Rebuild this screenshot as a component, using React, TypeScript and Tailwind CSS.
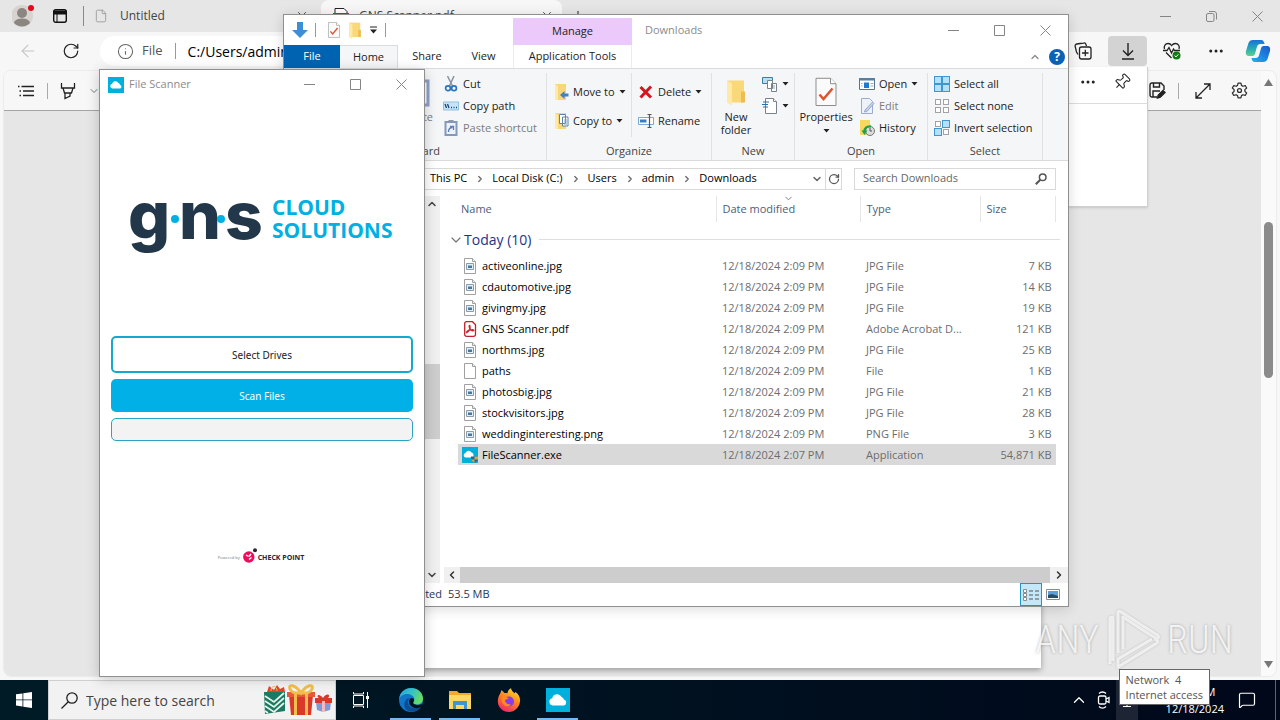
import React from "react";
import {
  ArrowLeft,
  RotateCw,
  Info,
  File as FileIcon,
  X,
  Plus,
  MoreHorizontal,
  Pin,
  ChevronDown,
  ChevronUp,
  ChevronLeft,
  ChevronRight,
  MessageSquare,
} from "lucide-react";

type Kids = { children?: React.ReactNode };

/* ---------- small shared drawings ---------- */

function CloudTile({ className }: { className: string }) {
  return (
    <svg className={className} viewBox="0 0 24 24" aria-hidden="true">
      <rect width="24" height="24" fill="#00b0dc" />
      <path
        d="M6.600 17.400a3.600 3.600 0 0 1-.4-7.100A5 5 0 0 1 15.600 9a3.200 3.200 0 0 1 2.300 2.600 3 3 0 0 1 .1 5.800z"
        fill="#fff"
      />
    </svg>
  );
}

function Caret() {
  return (
    <svg width="7" height="4" viewBox="0 0 7 4" aria-hidden="true">
      <path d="M0.5 0h6L3.500 3.600z" fill="#222" />
    </svg>
  );
}

function CheckPage({ className }: { className: string }) {
  return (
    <svg className={className} viewBox="0 0 22 29" aria-hidden="true">
      <path d="M1 .8h14.500L21 6.200V28H1z" fill="#fbfbfb" stroke="#8d8d8d" />
      <path d="M15.500 .8v5.400H21" fill="#fff" stroke="#8d8d8d" />
      <path d="M4.500 17l4 4.500L17.500 11" fill="none" stroke="#d9552f" strokeWidth="2.500" />
    </svg>
  );
}

function Folder({ className }: { className: string }) {
  return (
    <svg className={className} viewBox="0 0 20 26" aria-hidden="true">
      <path d="M1 1h17v22H1z" fill="#f9d879" />
      <path d="M1 1l5 3v22l-5-3z" fill="#ffe9a6" />
      <path d="M15 12h4v11h-4z" fill="#eebc50" />
    </svg>
  );
}

function WindowButtons({ max = true, className }: { max?: boolean; className: string }) {
  const cell = "flex h-full w-[46px] items-center justify-center text-[#858585]";
  return (
    <div className={className}>
      <button className={cell} aria-label="Minimize">
        <svg width="11" height="11" viewBox="0 0 11 11"><path d="M0 5.500h11" stroke="currentColor" /></svg>
      </button>
      <button className={cell} aria-label="Maximize">
        {max ? (
          <svg width="11" height="11" viewBox="0 0 11 11"><path d="M.5.5h10v10H.5z" fill="none" stroke="currentColor" /></svg>
        ) : (
          <svg width="11" height="11" viewBox="0 0 11 11" fill="none" stroke="currentColor">
            <rect x=".5" y="2.500" width="7.500" height="8" rx="1.500" />
            <path d="M3 .5h5a2.500 2.500 0 0 1 2.500 2.500v5.500" />
          </svg>
        )}
      </button>
      <button className={cell} aria-label="Close">
        <svg width="11" height="11" viewBox="0 0 11 11"><path d="M.5.5l10 10M10.500.5l-10 10" stroke="currentColor" /></svg>
      </button>
    </div>
  );
}

/* ---------- browser ---------- */

function Browser() {
  return (
    <section className="flex min-h-0 flex-1 flex-col bg-[#f7f7f7] text-[#222]">
      <div className="flex h-8 shrink-0 items-center bg-[#e6e6e6] pl-3">
        <svg className="mr-[18px] h-[22px] w-[22px]" viewBox="0 0 22 22" aria-hidden="true">
          <circle cx="10" cy="11" r="11" fill="#d8d3cf" />
          <circle cx="10" cy="8" r="5" fill="#8c8681" />
          <path d="M2 18a8 4.500 0 0 1 16 0 11 11 0 0 1-16 0z" fill="#8c8681" />
          <circle cx="19" cy="3" r="3" fill="#e00b1c" />
        </svg>
        <svg className="h-4 w-4" viewBox="0 0 16 16" aria-hidden="true">
          <rect x="1.700" y="1.700" width="12.600" height="12.600" rx="2" fill="none" stroke="#111" strokeWidth="1.400" />
          <path d="M1.500 2.500h13v4h-13z" fill="#111" />
          <path d="M5 6v8" stroke="#111" strokeWidth="1" />
        </svg>
        <span className="ml-[15px] h-5 w-px bg-[#888]" />
        <div className="flex w-[237px] items-center pl-2.5 text-[12px]">
          <FileIcon className="mr-3 h-4 w-3.5 text-[#999]" strokeWidth={1.5} />
          <span className="flex-1 text-[#444]">Untitled</span>
          <X className="mr-3 h-3.5 w-3.5 text-[#333]" strokeWidth={1.5} />
        </div>
        <div className="flex h-8 w-[241px] items-center rounded-t-lg bg-[#f7f7f7] pl-3 text-[12px]">
          <svg className="mr-2.5 h-4 w-4" viewBox="0 0 16 16" aria-hidden="true">
            <path d="M2 .5h9l3 3V15H2z" fill="#fff" stroke="#222" />
            <path d="M0 5h16v6H0z" fill="#d41f1f" />
          </svg>
          <span className="flex-1 text-[#444]">GNS Scanner.pdf</span>
          <X className="mr-2 h-3.5 w-3.5 text-[#333]" strokeWidth={1.5} />
        </div>
        <Plus className="ml-2 h-4 w-4" strokeWidth={1.5} />
        <WindowButtons max={false} className="ml-auto flex h-8" />
      </div>

      <div className="flex h-[38px] shrink-0 items-center pl-[18px]">
        <ArrowLeft className="h-5 w-5 text-[#c6c6c6]" strokeWidth={1.3} />
        <RotateCw className="ml-6 h-[18px] w-[18px] text-[#222]" strokeWidth={1.6} />
        <div className="ml-5 flex h-[30px] flex-1 items-center rounded-full bg-white pl-[17px] text-[14px]">
          <Info className="h-[17px] w-[17px] text-[#666]" strokeWidth={1.5} />
          <span className="ml-2 text-[13px] text-[#555]">File</span>
          <span className="mx-3 h-4 w-px bg-[#999]" />
          <span className="text-black">C:/Users/admin/</span>
        </div>
        <div className="ml-6 flex items-center">
          <svg className="h-[18px] w-[18px]" viewBox="0 0 18 18" fill="none" stroke="#222" strokeWidth="1.300" aria-hidden="true">
            <path d="M4 12.500 2.500 10 1.200 4.500a2 2 0 0 1 1.500-2.500l7-1a2 2 0 0 1 2.300 1.500l.5 1.500" />
            <rect x="5.500" y="5" width="11.500" height="12" rx="2" />
            <path d="M8 11h6.500M11.300 7.700v6.500" />
          </svg>
          <button aria-label="Downloads" className="ml-4 flex h-[30px] w-[39px] items-center justify-center rounded bg-[#d3d3d3]">
            <svg className="h-[18px] w-[14px]" viewBox="0 0 14 18" fill="none" stroke="#222" strokeWidth="1.400">
              <path d="M7 1v12M2 8.500l5 5 5-5M1 17h12" />
            </svg>
          </button>
          <svg className="ml-4 h-[18px] w-[18px]" viewBox="0 0 18 18" fill="none" stroke="#222" strokeWidth="1.300" aria-hidden="true">
            <path d="M1.500 7C.5 4 2.500 1.500 5 1.500c1.700 0 3 1 3.700 2 .7-1 2-2 3.700-2 2.600 0 4.600 2.500 3.600 5.500M3 10.500l5.500 5.500" />
            <path d="M0 8.500h4l2-3 2.500 5.500 2-4 1 1.500H17" />
            <circle cx="13.500" cy="13.500" r="4" fill="#107c10" stroke="none" />
            <path d="M11.600 13.600l1.400 1.300 2.400-2.600" stroke="#fff" strokeWidth="1" />
          </svg>
          <MoreHorizontal className="ml-[26px] h-[18px] w-[18px]" strokeWidth={2} />
          <svg className="ml-5 mr-[9px] h-[24px] w-[26px]" viewBox="0 0 26 24" aria-hidden="true">
            <defs>
              <linearGradient id="cpa" x1="0" y1="0" x2="0" y2="1">
                <stop offset="0" stopColor="#1d6fd6" /><stop offset=".5" stopColor="#22a8b8" /><stop offset="1" stopColor="#5fd08c" />
              </linearGradient>
              <linearGradient id="cpb" x1="1" y1="0" x2="0" y2="1">
                <stop offset="0" stopColor="#1b58c9" /><stop offset=".5" stopColor="#1e84e0" /><stop offset="1" stopColor="#26b0e6" />
              </linearGradient>
            </defs>
            <path d="M8 1h8c2.500 0 3 2 3.600 4l-4.200 0c-2 0-3 1-3.500 3l-2 7c-.5 1.500-1.500 2-3 2H4c-3 0-3.500-2.500-3-5l2.500-8C4.300 2 5.500 1 8 1z" fill="url(#cpa)" />
            <path d="M18 23h-8c-2.500 0-3-2-3.600-4l4.200 0c2 0 3-1 3.500-3l2-7c.5-1.500 1.500-2 3-2H22c3 0 3.500 2.500 3 5l-2.500 8c-.8 2-2 3-4.500 3z" fill="url(#cpb)" />
          </svg>
        </div>
      </div>

      <div className="mb-[3px] ml-[3px] mr-[3px] flex min-h-0 flex-1 overflow-hidden rounded-lg border border-[#ececec] bg-[#fafafa]">
        <div className="flex min-w-0 flex-1 flex-col">
          <div className="flex h-10 shrink-0 items-center border-b border-[#a5a5a5] bg-[#f7f7f7] pl-[13px]">
            <svg className="h-4 w-[18px]" viewBox="0 0 18 16" stroke="#222" strokeWidth="1.300" aria-hidden="true">
              <path d="M4.500 3.500H17M6 8h11M6 12.500h11M1 3.500h1.500M2.500 8H4M2.500 12.500H4" />
            </svg>
            <span className="ml-3 h-4 w-px bg-[#aaa]" />
            <svg className="ml-3 h-[18px] w-[16px]" viewBox="0 0 16 18" fill="none" stroke="#222" strokeWidth="1.300" aria-hidden="true">
              <path d="M1.500 1v5h13V1M3 6l1.500 5h7L13 6M5 11v5.500l5-2.300V11" />
            </svg>
            <ChevronDown className="ml-3 h-3 w-3 text-[#777]" strokeWidth={2} />
            <div className="ml-auto flex items-center">
              <svg className="h-[17px] w-[17px]" viewBox="0 0 17 17" fill="none" stroke="#222" strokeWidth="1.400" aria-hidden="true">
                <path d="M8 15H3a2 2 0 0 1-2-2V3a2 2 0 0 1 2-2h9l3 3v4M4.500 1v4h6V1M4 15V9h7" />
                <path d="M8.500 16l.8-2.800 4.700-4.700 2 2-4.700 4.700z" fill="#222" />
              </svg>
              <span className="ml-3 h-4 w-px bg-[#aaa]" />
              <svg className="ml-4 h-4 w-4" viewBox="0 0 16 16" fill="none" stroke="#222" strokeWidth="1.300" aria-hidden="true">
                <path d="M1.500 14.500l13-13M9 1h6v6M1 9v6h6" />
              </svg>
              <svg className="ml-5 mr-[13px] h-[17px] w-[17px]" viewBox="0 0 24 24" fill="none" stroke="#333" strokeWidth="1.800" aria-hidden="true">
                <path d="M10 1.500h4l.8 3.300 2 1.200 3.300-1 2 3.500-2.500 2.300v2.400l2.500 2.300-2 3.500-3.300-1-2 1.200-.8 3.300h-4l-.8-3.300-2-1.200-3.300 1-2-3.500 2.500-2.300v-2.400L1.900 8.500l2-3.500 3.300 1 2-1.200z" strokeLinejoin="round" />
                <circle cx="12" cy="12" r="2.800" />
              </svg>
            </div>
          </div>
          <div className="flex min-h-0 flex-1 justify-center bg-[#e6e6e6] pb-2">
            <div className="w-[816px] bg-white shadow-[0_2px_6px_rgba(0,0,0,0.35)]" />
          </div>
        </div>
        <div className="flex w-[15px] flex-col items-center py-2">
          <svg width="9" height="7" viewBox="0 0 9 7"><path d="M4.500 0L9 7H0z" fill="#777" /></svg>
          <span className="mt-[136px] h-[156px] w-[9px] rounded-full bg-[#8b8b8b]" />
          <svg className="mt-auto" width="9" height="7" viewBox="0 0 9 7"><path d="M4.500 7L9 0H0z" fill="#777" /></svg>
        </div>
      </div>
    </section>
  );
}

function DownloadsFlyout() {
  return (
    <div className="absolute right-[132px] top-[67px] h-[140px] w-[360px] border-b border-r border-[#d0d0d0] bg-white shadow-sm">
      <div className="flex h-[37px] items-center justify-end gap-4 border-b border-[#dcdcdc] pb-1.5 pr-4">
        <MoreHorizontal className="h-[18px] w-[18px] text-[#222]" strokeWidth={2} />
        <Pin className="h-[18px] w-[18px] rotate-45 text-[#222]" strokeWidth={1.4} />
      </div>
    </div>
  );
}

/* ---------- file explorer ---------- */

function Group({ label, className, inner, children }: Kids & { label: string; className: string; inner?: string }) {
  return (
    <div className={className}>
      <div className={inner ?? "flex h-[70px] items-start"}>{children}</div>
      <div className="text-center text-[11px] leading-4 text-[#444]">{label}</div>
    </div>
  );
}

function Cmd({ icon, label, caret, dim }: { icon: React.ReactNode; label?: string; caret?: boolean; dim?: boolean }) {
  return (
    <button className="flex h-[22px] items-center gap-1 whitespace-nowrap">
      {icon}
      {label && <span className={dim ? "text-[#7c7c7c]" : "text-[#222]"}>{label}</span>}
      {caret && <Caret />}
    </button>
  );
}

function SelectIcon({ on }: { on: boolean[] }) {
  const at = [[0.5, 0.5], [8.5, 0.5], [0.5, 8.5], [8.5, 8.5]];
  return (
    <svg className="h-4 w-4" viewBox="0 0 16 16" aria-hidden="true">
      {at.map(([x, y], i) => (
        <rect
          key={i}
          x={on[i] ? x : x + 1}
          y={on[i] ? y : y + 1}
          width={on[i] ? 7 : 5}
          height={on[i] ? 7 : 5}
          fill={on[i] ? "#b5e0fb" : "#fff"}
          stroke={on[i] ? "#3f97d0" : "#a2a2a2"}
        />
      ))}
    </svg>
  );
}

const icon16 = "h-4 w-4";

function Ribbon() {
  return (
    <div className="flex h-[92px] border-b border-[#dadbdc] bg-[#f5f6f7] pt-1 text-[11px]">
      <Group label="Clipboard" className="w-[263px] border-r border-[#dfe1e3]">
        <button className="ml-auto flex w-10 flex-col items-center pt-1">
          <svg className="h-8 w-[26px]" viewBox="0 0 26 32" aria-hidden="true">
            <path d="M2 4h20v24H2z" fill="#fff" stroke="#8ea0c6" strokeWidth="3" />
            <path d="M8 1h8v5H8z" fill="#9aa5b8" />
          </svg>
          <span className="leading-4 text-[#7c7c7c]">Paste</span>
        </button>
        <div className="ml-1 w-[103px]">
          <Cmd label="Cut" icon={
            <svg className={icon16} viewBox="0 0 16 16" fill="none" aria-hidden="true">
              <path d="M4.500 0l5 10M11 0l-4.500 10" stroke="#8b949e" strokeWidth="1.500" />
              <circle cx="5" cy="12.300" r="2.400" stroke="#2a76b8" strokeWidth="1.700" />
              <circle cx="11" cy="12.300" r="2.400" stroke="#2a76b8" strokeWidth="1.700" />
            </svg>} />
          <Cmd label="Copy path" icon={
            <svg className={icon16} viewBox="0 0 16 16" fill="none" aria-hidden="true">
              <path d="M.5 4h15v8H.5z" fill="#c6e5fa" stroke="#8fbfe3" />
              <path d="M2 6l1.500 4M4.500 6L6 10M8 9.500h1M10.500 9.500h1M13 9.500h1" stroke="#18456f" strokeWidth="1.300" />
            </svg>} />
          <Cmd dim label="Paste shortcut" icon={
            <svg className={icon16} viewBox="0 0 16 16" fill="none" aria-hidden="true">
              <path d="M2.500 2h11v13h-11z" fill="#eef2fa" stroke="#8398bd" strokeWidth="2" />
              <path d="M5.500 0h5v3h-5z" fill="#8997ad" />
              <path d="M5.500 12c0-3 1-4.500 4-4.500M7 6.500h3.500V10" stroke="#5d7fb5" strokeWidth="1.300" />
            </svg>} />
        </div>
      </Group>

      <Group label="Organize" className="w-[165px] border-r border-[#dfe1e3]">
        <div className="flex h-16 w-[85px] flex-col gap-[7px] border-r border-[#dfe1e3] pl-1.5 pt-2">
          <Cmd caret label="Move to" icon={
            <svg className={icon16} viewBox="0 0 16 16" aria-hidden="true">
              <path d="M2 0h11v16H2z" fill="#f8d778" /><path d="M2 0l3 2v14H2z" fill="#ffe9a6" />
              <path d="M15.500 9.500h-4V7L7 11l4.500 4v-2.500h4z" fill="#3c83c8" />
            </svg>} />
          <Cmd caret label="Copy to" icon={
            <svg className={icon16} viewBox="0 0 16 16" aria-hidden="true">
              <path d="M2 0h11v16H2z" fill="#f8d778" /><path d="M2 0l3 2v14H2z" fill="#ffe9a6" />
              <path d="M6.500 1.500h6v9h-6zM9.500 4H15v9H9.500z" fill="#fff" stroke="#5d83ad" />
              <path d="M11 7h3M11 9h3M11 11h3" stroke="#7ea6d0" />
            </svg>} />
        </div>
        <div className="flex flex-col gap-[7px] pl-1.5 pt-2">
          <Cmd caret label="Delete" icon={
            <svg className={icon16} viewBox="0 0 16 16" aria-hidden="true"><path d="M2.500 3l10.500 10.500M13 2.500L2.500 13.500" stroke="#d8151f" strokeWidth="3" /></svg>} />
          <Cmd label="Rename" icon={
            <svg className={icon16} viewBox="0 0 16 16" fill="none" aria-hidden="true">
              <path d="M.5 4.500h15v7H.5z" fill="#fff" stroke="#7aa9d4" /><path d="M2 6.500h6.500v3H2z" fill="#2f80c8" />
              <path d="M9.500 1.500h4M9.500 14.500h4M11.500 1.500v13" stroke="#555" strokeWidth="1.200" />
            </svg>} />
        </div>
      </Group>

      <Group label="New" className="w-[83px] border-r border-[#dfe1e3]" inner="flex h-[70px] items-start pl-0.5">
        <button className="flex w-[44px] flex-col items-center pt-1 text-[#222]">
          <Folder className="mt-0.5 h-[27px] w-5" />
          <span className="mt-1 leading-[13px]">New<br />folder</span>
        </button>
        <div className="pl-1">
          <Cmd caret icon={
            <svg className={icon16} viewBox="0 0 16 16" fill="#fff" aria-hidden="true">
              <path d="M.5 1.500h10v6H.5z" fill="#bcdcf0" stroke="#3d7ea8" /><path d="M5.500 4.500h5v8h-5zM9.500 7.500h5v8h-5z" stroke="#77828c" />
              <path d="M11 10h2M11 12h2" stroke="#8aa" />
            </svg>} />
          <Cmd caret icon={
            <svg className={icon16} viewBox="0 0 16 16" fill="#fff" aria-hidden="true">
              <path d="M3.500.5h8l3 3v12h-11z" stroke="#77828c" /><path d="M11.500.5v3h3" stroke="#77828c" />
              <path d="M1 4h6M0 6.500h6M1 9h5" stroke="#2a6fa8" strokeWidth="1.200" />
            </svg>} />
        </div>
      </Group>

      <Group label="Open" className="w-[133px] border-r border-[#dfe1e3]" inner="flex h-[70px] items-start pl-0.5">
        <button className="flex w-[58px] flex-col items-center pt-1 text-[#222]">
          <CheckPage className="h-[30px] w-[22px]" />
          <span className="mt-0.5 leading-4">Properties</span>
          <span className="mt-1"><Caret /></span>
        </button>
        <div className="pl-1">
          <Cmd caret label="Open" icon={
            <svg className={icon16} viewBox="0 0 16 16" aria-hidden="true">
              <path d="M.5 2.500h15v11H.5z" fill="#fff" stroke="#5a7189" /><path d="M0 2h16v2.500H0z" fill="#5a7f9e" />
              <path d="M5 6.500h5v5.500H5z" fill="#1f78d2" /><path d="M11.500 7.500h3M11.500 10h3M2 7.500h1.500M2 10h1.500" stroke="#9ab" />
            </svg>} />
          <Cmd dim label="Edit" icon={
            <svg className={icon16} viewBox="0 0 16 16" aria-hidden="true">
              <path d="M2.500.5h8l3 3v12h-11z" fill="#eef2fb" stroke="#9aabd0" /><path d="M6 12l7.500-8 1.500 1.500L8 13.500l-2.500.5z" fill="#c3cfe8" stroke="#8c9dc4" strokeWidth=".8" />
            </svg>} />
          <Cmd label="History" icon={
            <svg className={icon16} viewBox="0 0 16 16" aria-hidden="true">
              <path d="M1 0h10v15H1z" fill="#f8d95f" /><circle cx="11" cy="11" r="4.500" fill="#ddd" stroke="#777" />
              <path d="M11 8v3h2" stroke="#555" fill="none" /><path d="M5 13c0-5 3-7 7-6.500" stroke="#22a14a" strokeWidth="2.400" fill="none" /><path d="M2.500 10.500h6L5.500 15z" fill="#22a14a" />
            </svg>} />
        </div>
      </Group>

      <Group label="Select" className="w-[115px] border-r border-[#dfe1e3]" inner="flex h-[70px] items-start pl-1.5">
        <div>
          <Cmd label="Select all" icon={<SelectIcon on={[true, true, true, true]} />} />
          <Cmd label="Select none" icon={<SelectIcon on={[false, false, false, false]} />} />
          <Cmd label="Invert selection" icon={<SelectIcon on={[false, true, true, false]} />} />
        </div>
      </Group>
    </div>
  );
}

type Entry = { name: string; date: string; type: string; size: string; kind: "img" | "pdf" | "blank" | "exe" };

const d9 = "12/18/2024 2:09 PM";
const entries: Entry[] = [
  { name: "activeonline.jpg", date: d9, type: "JPG File", size: "7 KB", kind: "img" },
  { name: "cdautomotive.jpg", date: d9, type: "JPG File", size: "14 KB", kind: "img" },
  { name: "givingmy.jpg", date: d9, type: "JPG File", size: "19 KB", kind: "img" },
  { name: "GNS Scanner.pdf", date: d9, type: "Adobe Acrobat D...", size: "121 KB", kind: "pdf" },
  { name: "northms.jpg", date: d9, type: "JPG File", size: "25 KB", kind: "img" },
  { name: "paths", date: d9, type: "File", size: "1 KB", kind: "blank" },
  { name: "photosbig.jpg", date: d9, type: "JPG File", size: "21 KB", kind: "img" },
  { name: "stockvisitors.jpg", date: d9, type: "JPG File", size: "28 KB", kind: "img" },
  { name: "weddinginteresting.png", date: d9, type: "PNG File", size: "3 KB", kind: "img" },
  { name: "FileScanner.exe", date: "12/18/2024 2:07 PM", type: "Application", size: "54,871 KB", kind: "exe" },
];

function EntryIcon({ kind }: { kind: Entry["kind"] }) {
  if (kind === "exe") {
    return (
      <svg className="h-4 w-4" viewBox="0 0 16 16" aria-hidden="true">
        <path d="M0 0h16v16H0z" fill="#00b0dc" />
        <path d="M3.500 10.500A2.300 2.300 0 0 1 3.500 6 3.300 3.300 0 0 1 9.500 5.500a2.500 2.500 0 0 1 2 2.500v2.500z" fill="#fff" />
        <path d="M9 9.500h7V13l-3.500 3L9 13z" fill="#2f5f9e" /><path d="M12.500 9.500H16v3h-3.500zM9 12.500h3.500V16L9 13z" fill="#d3a94c" />
      </svg>
    );
  }
  if (kind === "pdf") {
    return (
      <svg className="h-4 w-4" viewBox="0 0 16 16" fill="none" aria-hidden="true">
        <path d="M2.700 2.500a1.800 1.800 0 0 1 1.800-1.800h6l3 3v9.800a1.800 1.800 0 0 1-1.800 1.800H4.500a1.800 1.800 0 0 1-1.800-1.800z" fill="#fff" stroke="#c2202d" strokeWidth="1.300" />
        <path d="M4.700 11.700C7 10.500 8.500 7 8 5c-.6-1.300-1.300 0-.5 1.700.8 2 2.500 3.300 4 3 1-.5 0-1.200-1.500-1-2 .2-4.500 1-5.300 2.200-.2.700 0 .8 0 .8z" stroke="#d12431" strokeWidth="1.300" />
      </svg>
    );
  }
  return (
    <svg className="h-4 w-4" viewBox="0 0 16 16" aria-hidden="true">
      <path d="M2.500.5h8l3 3v12h-11z" fill="#fff" stroke="#a0a0a0" />
      <path d="M10.500.5v3h3" fill="#eee" stroke="#a0a0a0" />
      {kind === "img" && (
        <>
          <path d="M4.500 5.500h7v6h-7z" fill="#e4eef6" stroke="#8b9bab" />
          <path d="M6 7.500h4v2.500H6z" fill="#44789e" />
        </>
      )}
    </svg>
  );
}

function FileTable() {
  const th = "relative border-r border-[#e5e5e5] pl-1.5 text-left font-normal text-[#4c607a]";
  const td = "p-0 pl-1.5 pt-0.5 text-[#6d6d6d]";
  return (
    <table className="ml-[14px] w-[598px] table-fixed border-collapse text-[11px]">
      <colgroup>
        <col className="w-[258px]" /><col className="w-[144px]" /><col className="w-[120px]" /><col />
      </colgroup>
      <thead>
        <tr className="h-[26px]">
          <th className="border-r border-[#e5e5e5] pl-[3px] text-left font-normal text-[#4c607a]">Name</th>
          <th className={th}>
            Date modified
            <ChevronDown className="absolute left-[66px] top-[-3px] h-[11px] w-[11px] text-[#777]" strokeWidth={2} />
          </th>
          <th className={th}>Type</th>
          <th className={th}>Size</th>
        </tr>
        <tr className="h-[33px]">
          <th colSpan={4} className="p-0 pt-0.5 font-normal">
            <div className="-ml-2.5 -mr-1 flex items-center">
              <ChevronDown className="h-4 w-4 text-[#777]" strokeWidth={1.8} />
              <span className="mr-2 text-[14px] text-[#1e3287]">Today (10)</span>
              <span className="h-px flex-1 bg-[#dedede]" />
            </div>
          </th>
        </tr>
      </thead>
      <tbody>
        {entries.map((e) => (
          <tr key={e.name} className={e.kind === "exe" ? "h-[21px] bg-[#d9d9d9]" : "h-[21px]"}>
            <td className="p-0 pl-1">
              <div className="flex items-center gap-1 whitespace-nowrap text-black">
                <EntryIcon kind={e.kind} />
                <span className="pt-0.5">{e.name}</span>
              </div>
            </td>
            <td className={td}>{e.date}</td>
            <td className={td}>{e.type}</td>
            <td className="p-0 pr-1 pt-0.5 text-right text-[#6d6d6d]">{e.size}</td>
          </tr>
        ))}
      </tbody>
    </table>
  );
}

function Explorer() {
  const crumbs = ["This PC", "Local Disk (C:)", "Users", "admin", "Downloads"];
  return (
    <section className="absolute left-[283px] top-[14px] flex h-[593px] w-[786px] flex-col border border-[#8f8f8f] bg-white text-[11px] text-[#222] shadow-[0_2px_12px_rgba(0,0,0,0.15)]">
      <header className="flex h-[30px] shrink-0 items-center">
        <div className="flex w-[229px] items-center pl-2">
          <svg className="h-4 w-4" viewBox="0 0 16 16" aria-hidden="true"><path d="M5 0h6v8h5l-8 8-8-8h5z" fill="#3c8ed8" /></svg>
          <span className="ml-[7px] h-3.5 w-px bg-[#999]" />
          <CheckPage className="ml-2.5 h-4 w-4" />
          <Folder className="ml-1.5 h-[17px] w-3.5" />
          <svg className="ml-2 h-2 w-[7px]" viewBox="0 0 7 8" aria-hidden="true"><path d="M0 1h7" stroke="#222" /><path d="M0 3.500h7L3.500 7.500z" fill="#222" /></svg>
          <span className="ml-2 h-3.5 w-px bg-[#999]" />
        </div>
        <div className="flex h-[27px] w-[119px] items-center justify-center self-end bg-[#ecc9fb]">Manage</div>
        <span className="ml-[13px] text-[#8b8b8b]">Downloads</span>
        <WindowButtons className="ml-auto flex h-full" />
      </header>

      <nav className="flex h-6 shrink-0 items-center border-b border-[#dadbdc]">
        <button className="h-full w-14 bg-[#0063b1] text-white">File</button>
        <button className="h-full w-[58px] border-r border-t border-[#dadbdc] bg-[#f5f6f7]">Home</button>
        <button className="h-full w-[58px]">Share</button>
        <button className="h-full w-[57px] pr-0.5">View</button>
        <button className="h-full w-[119px] border-x border-[#ececec]">Application Tools</button>
        <ChevronUp className="ml-auto h-3 w-3 text-[#888]" strokeWidth={2.5} />
        <span className="ml-2 mr-[3px] flex h-4 w-4 items-center justify-center rounded-full bg-[#0a61b8] text-[12px] font-bold text-white">?</span>
      </nav>

      <Ribbon />

      <div className="flex h-[35px] shrink-0 items-center gap-3 pr-3">
        <div className="flex h-[22px] flex-1 items-center border border-[#d9d9d9] pl-[145px] text-black">
          {crumbs.map((c, i) => (
            <React.Fragment key={c}>
              {i > 0 && <ChevronRight className="ml-2 mr-[7px] h-2.5 w-2.5 text-[#666]" strokeWidth={3} />}
              <span className="whitespace-nowrap">{c}</span>
            </React.Fragment>
          ))}
          <ChevronDown className="ml-auto mr-0.5 h-3 w-3 text-[#666]" strokeWidth={3} />
          <span className="flex h-full w-4 items-center justify-center border-l border-[#d9d9d9]">
            <RotateCw className="h-3 w-3 text-[#555]" strokeWidth={2.5} />
          </span>
        </div>
        <label className="flex h-[22px] w-[202px] items-center border border-[#d9d9d9] pl-2 pr-2">
          <input aria-label="Search Downloads" placeholder="Search Downloads" className="min-w-0 flex-1 bg-transparent outline-none placeholder:text-[#666]" />
          <svg className="h-3 w-3" viewBox="0 0 12 12" fill="none" stroke="#555" aria-hidden="true">
            <circle cx="7.700" cy="4.300" r="3.300" strokeWidth="1.500" />
            <path d="M5.300 6.700L.8 11.200" strokeWidth="2" />
          </svg>
        </label>
      </div>

      <div className="flex min-h-0 flex-1">
        <div className="flex w-[156px] shrink-0 justify-end">
          <div className="flex w-[17px] flex-col items-center bg-[#f0f0f0] py-0.5">
            <ChevronUp className="h-3 w-3 text-[#444]" strokeWidth={3} />
            <span className="mt-[154px] h-[75px] w-full bg-[#cdcdcd]" />
            <ChevronDown className="mt-auto h-3 w-3 text-[#444]" strokeWidth={3} />
          </div>
        </div>
        <div className="ml-1 flex min-w-0 flex-1 flex-col">
          <div className="flex-1"><FileTable /></div>
          <div className="flex h-4 items-center bg-[#f0f0f0]">
            <ChevronLeft className="mx-0.5 h-3 w-3 text-[#333]" strokeWidth={3} />
            <span className="h-full flex-1 bg-[#cdcdcd]" />
            <ChevronRight className="mx-[3px] h-3 w-3 text-[#333]" strokeWidth={3} />
          </div>
        </div>
      </div>

      <footer className="flex h-[23px] shrink-0 items-center pr-2 text-[#1e395b]">
        <span className="w-[158px] text-right">1 item selected</span>
        <span className="ml-1.5">53.5 MB</span>
        <span className="ml-auto flex h-[23px] w-[22px] items-center justify-center border border-[#2693c0] bg-[#c5e8f9]">
          <svg className="h-3 w-4" viewBox="0 0 16 12" fill="none" stroke="#555" aria-hidden="true">
            <path d="M.5.5h3v3h-3zM.5 4.500h3v3h-3zM.5 8.500h3v3h-3z" fill="#fff" stroke="#8b8b8b" /><path d="M6 2h4M12 2h4M6 6h4M12 6h4M6 10h4M12 10h4" />
          </svg>
        </span>
        <svg className="ml-1 h-[11px] w-3.5" viewBox="0 0 14 11" aria-hidden="true">
          <path d="M.5.5h13v10H.5z" fill="#fff" stroke="#8b8b8b" /><path d="M2 2h10v7H2z" fill="#5d9fda" /><path d="M2 6l4-1 6 2v2H2z" fill="#264f66" />
        </svg>
      </footer>
    </section>
  );
}

/* ---------- scanner app ---------- */

function Scanner() {
  return (
    <section className="absolute left-[99px] top-[69px] flex h-[608px] w-[326px] flex-col border border-[#8f8f8f] bg-white shadow-[0_2px_12px_rgba(0,0,0,0.2)]">
      <header className="flex h-[29px] shrink-0 items-center pl-2">
        <CloudTile className="h-4 w-4" />
        <span className="ml-[5px] text-[11px] text-[#8b8b8b]">File Scanner</span>
        <WindowButtons className="ml-auto flex h-full" />
      </header>

      <div className="mx-[11px] flex flex-1 flex-col">
        <div className="flex h-[237px] items-start pl-[17px] pt-[76px]">
          <div className="flex items-center font-['Inter',sans-serif] text-[66px] font-extrabold leading-[80px] text-[#22384a]">
            <span className="w-[38px]">g</span>
            <span className="ml-[5px] mt-2 h-2 w-2 shrink-0 rounded-full bg-[#00b0e3]" />
            <span className="w-9">n</span>
            <span className="ml-0.5 mt-2 h-2 w-2 shrink-0 rounded-full bg-[#00b0e3]" />
            <span className="w-9">s</span>
          </div>
          <p className="ml-[11px] mt-[21px] text-[21px] font-bold leading-[23px] text-[#00b0e3]">
            CLOUD<br />SOLUTIONS
          </p>
        </div>
        <button className="h-[37px] rounded-[5px] border-2 border-[#14a7cf] bg-white pt-0.5 font-['Noto_Sans',sans-serif] text-[10px] text-[#222]">Select Drives</button>
        <button className="mt-1.5 h-[33px] rounded-[5px] bg-[#00b0e6] pt-0.5 font-['Noto_Sans',sans-serif] text-[10px] text-white">Scan Files</button>
        <div role="progressbar" aria-label="Scan progress" className="mt-1.5 h-[23px] rounded-[5px] border border-[#2ba4c4] bg-[#f3f3f3]" />
        <div className="mt-[106px] flex items-center justify-center pr-0.5">
          <span className="mt-1.5 text-[4px] text-[#777]">Powered by</span>
          <svg className="ml-[3px] h-[15px] w-[15px]" viewBox="0 0 15 15" aria-hidden="true">
            <circle cx="5.800" cy="9" r="5.700" fill="#ee0c5d" /><circle cx="12" cy="2.300" r="2" fill="#2b2233" />
            <path d="M3 7l2.500 1.500M6 11.500L8.500 9.500M6 8.500L8 6" stroke="#fff" strokeWidth="1.400" />
          </svg>
          <span className="mt-1.5 text-[7px] font-bold text-[#2b2233]">CHECK POINT</span>
        </div>
      </div>
    </section>
  );
}

/* ---------- watermark, taskbar ---------- */

function Watermark() {
  return (
    <div className="absolute bottom-[49px] right-[47px] flex items-center font-['Roboto_Condensed','Liberation_Sans_Narrow',sans-serif] text-[38px] font-light leading-[62px] text-white/80 [text-shadow:0_0_3px_rgba(0,0,0,0.3)]">
      ANY
      <svg className="mx-1.5 h-[62px] w-[56px] drop-shadow-[0_0_1px_rgba(0,0,0,0.25)]" viewBox="0 0 56 62" fill="none" stroke="#fff" strokeOpacity=".7" strokeWidth="3" strokeLinejoin="round" aria-hidden="true">
        <path d="M8 52V10q0-3-3-1v46M13 44V4q0-3 3-1l36 23q3 2 0 4L18 8v32M52 34L13 58V50l34-20M52 34q2-3-3-4" />
      </svg>
      RUN
    </div>
  );
}

function TaskSlot({ active, label, children }: Kids & { active?: boolean; label: string }) {
  return (
    <button aria-label={label} className={active ? "mx-1 flex h-10 w-[41px] items-center justify-center border-b-2 border-[#76b9ed] pt-0.5" : "mx-1 flex h-10 w-[41px] items-center justify-center"}>
      {children}
    </button>
  );
}

function Taskbar() {
  return (
    <footer className="flex h-10 shrink-0 items-center bg-gradient-to-r from-[#001b26] to-[#00081a] text-white">
      <button aria-label="Start" className="flex h-full w-12 items-center justify-center">
        <svg className="h-4 w-4" viewBox="0 0 16 16" fill="#fff" aria-hidden="true"><path d="M0 2.300l6.500-.9v6.100H0zM7.300 1.300L16 0v7.500H7.300zM0 8.300h6.500v6.100L0 13.500zM7.300 8.300H16V16l-8.700-1.300z" /></svg>
      </button>
      <label className="flex h-full w-[288px] items-center border border-[#cfcfcf] bg-[#f2f2f2] pl-3">
        <svg className="h-[17px] w-[17px]" viewBox="0 0 17 17" fill="none" stroke="#222" strokeWidth="1.300" aria-hidden="true">
          <circle cx="11" cy="6" r="5.200" />
          <path d="M7.300 9.700L.5 16.500" />
        </svg>
        <input aria-label="Type here to search" placeholder="Type here to search" className="ml-2 min-w-0 flex-1 bg-transparent text-[14px] outline-none placeholder:text-[#444]" />
        <svg className="mr-0.5 h-8 w-[70px]" viewBox="0 0 70 32" aria-hidden="true">
          <path d="M4 8l2-6 5 4 3-5 3 4 4-2 1 5z" fill="#e3452c" />
          <path d="M8 7c0-6 6-6 6 0" fill="none" stroke="#f1bd4c" />
          <path d="M1 8h21v19l-20 3z" fill="#1b7a63" />
          <path d="M2 12l9 6 10-9M2 17l9 6 10-9M2 22l9 6 10-9M2 27l3 2" stroke="#e7f3ea" strokeWidth="1.700" fill="none" />
          <path d="M26 11h24l-2 20H28z" fill="#d8392b" /><path d="M24 8h28v5H24z" fill="#e9573b" />
          <path d="M31 9h3v22h-3zM42 9h3v22h-3z" fill="#f1bd4c" />
          <path d="M38 9C32 0 25 0 27 5s7 4 11 4c4 0 9 1 11-4S44 0 38 9z" fill="none" stroke="#f1bd4c" strokeWidth="3" />
          <path d="M53 18h15l-1 8-7 2-6-2z" fill="#7f9ad6" /><path d="M52 14h17v5H52z" fill="#d8392b" />
          <path d="M59 17h3v11h-3z" fill="#f4b9bd" /><path d="M60 14c-5-6-7-1-4 0h9c3-3-1-6-5 0z" fill="#d8392b" />
        </svg>
      </label>
      <button aria-label="Task View" className="flex h-full w-[50px] items-center justify-center">
        <svg className="h-4 w-[17px]" viewBox="0 0 17 16" fill="none" stroke="#fff" aria-hidden="true">
          <path d="M.5 3.500h10v9H.5zM.5 0v2h10V0M.5 16v-2h10v2M14.500 0v16" /><path d="M13 4h3v3h-3z" fill="#fff" stroke="none" />
        </svg>
      </button>
      <TaskSlot active label="Edge">
        <svg className="h-6 w-6" viewBox="0 0 24 24" aria-hidden="true">
          <defs>
            <linearGradient id="ed" x1="0" y1="0" x2="1" y2=".4"><stop offset="0" stopColor="#2aa5e0" /><stop offset=".55" stopColor="#35c4c4" /><stop offset="1" stopColor="#66dc62" /></linearGradient>
          </defs>
          <circle cx="12" cy="12" r="12" fill="#1275c9" />
          <path d="M.2 11C1 4 6 0 12 0c7 0 12 5 12 10.500 0 4-3 6-6.500 6-3 0-4-1.500-3.500-2.500.8-1 1.300-2 1.300-3C15.300 8 11.500 6 8 6 4 6 1 8.500.2 11z" fill="url(#ed)" />
          <path d="M8.500 22.500c-3-1.500-4-6-2.500-9 1-2.500 3-3.600 5-3.500-2 1.500-2.500 4-1.500 6.500 1.500 3.500 6 5 12 2.500-3 4.500-8 6-13 3.500z" fill="#0c4d94" />
          <path d="M11 11c1.500-2 5-.5 4 2-1 1.500-1 2.500.5 3.300 2.500 1.200 5 .7 7.300-.3L24 18l-3 1.500c-4 1.500-8 .5-10-2.500-1.500-2-1.500-4.500 0-6z" fill="#001420" />
        </svg>
      </TaskSlot>
      <TaskSlot active label="File Explorer">
        <svg className="h-[18px] w-[22px]" viewBox="0 0 22 18" aria-hidden="true">
          <path d="M0 0h8l2 2h12v16H0z" fill="#f0a92e" /><path d="M0 4h22v14H0z" fill="#fcd765" />
          <path d="M4 10h14v8h-3v-4H7v4H4z" fill="#3f94d2" />
        </svg>
      </TaskSlot>
      <TaskSlot label="Firefox">
        <svg className="h-6 w-6" viewBox="0 0 24 24" aria-hidden="true">
          <defs>
            <linearGradient id="ff" x1=".8" y1="0" x2=".3" y2="1"><stop offset="0" stopColor="#ffe226" /><stop offset=".45" stopColor="#ff8a1e" /><stop offset="1" stopColor="#f0246b" /></linearGradient>
          </defs>
          <path d="M3.500 5l1-3 3 3c1 0 2 0 3 .3 0-2 1.500-4.300 3.500-5 .5 2.500 2 3.500 3.500 5L18.500 4C22 6.500 23.500 10 23 13.500 22.300 19.500 17.500 24 12 24 5.500 24 .8 19 .8 13.500.8 10 2 7 3.500 5z" fill="url(#ff)" />
          <circle cx="12" cy="13.500" r="5" fill="#8a3de0" />
          <path d="M5 9c3-1 5 0 6.500 1.500-1.500.5-2.500 1.500-3.500 1.500 0 3 3 5 5.500 4 0 1.500-2.500 3-5 2C5.500 17 4 13 5 9z" fill="#ff8a1e" />
        </svg>
      </TaskSlot>
      <TaskSlot active label="File Scanner"><CloudTile className="h-6 w-6" /></TaskSlot>

      <div className="ml-auto flex h-full items-center">
        <ChevronUp className="mr-2 h-[18px] w-[18px]" strokeWidth={1.7} />
        <svg className="mr-1.5 h-[18px] w-3.5" viewBox="0 0 14 18" fill="none" stroke="#fff" strokeWidth="1.300" aria-hidden="true">
          <rect x="2.500" y="5" width="7.500" height="8" rx="1.500" /><path d="M10 8l3-1.500v5L10 10M3 2.500C5 .5 8 .5 10 2.500M3 15.500c2 2 5 2 7 0" />
        </svg>
        <span className="flex h-full w-[22px] items-center justify-center bg-[#1d2535]">
          <svg className="h-4 w-4" viewBox="0 0 16 16" fill="none" stroke="#fff" aria-hidden="true"><path d="M2.500 3.500h12v8h-12zM8 12v2.500M4 14.500h8" /></svg>
        </span>
        <svg className="ml-1.5 h-4 w-4" viewBox="0 0 16 16" fill="none" stroke="#fff" aria-hidden="true"><path d="M1 6h3l3-3v10l-3-3H1zM9.500 6c1 1 1 3 0 4M12 4c2 2 2 6 0 8" /></svg>
        <div className="ml-1.5 mr-3.5 text-center text-[11px] leading-[17px]">2:09 PM<br />12/18/2024</div>
        <MessageSquare className="h-[18px] w-[18px]" strokeWidth={1.6} />
        <span className="ml-[19px] mr-1 h-full w-px bg-[#5b6572]" />
      </div>
    </footer>
  );
}

export default function App() {
  return (
    <main className="relative flex h-screen w-full flex-col overflow-hidden font-['Open_Sans',sans-serif]">
      <Browser />
      <DownloadsFlyout />
      <Explorer />
      <Scanner />
      <Watermark />
      <Taskbar />
      <div role="tooltip" className="absolute bottom-[15px] right-[70px] border border-[#666] bg-white px-1.5 py-0.5 text-[11px] leading-[15px] text-[#555]">
        Network&nbsp; 4<br />Internet access
      </div>
    </main>
  );
}
